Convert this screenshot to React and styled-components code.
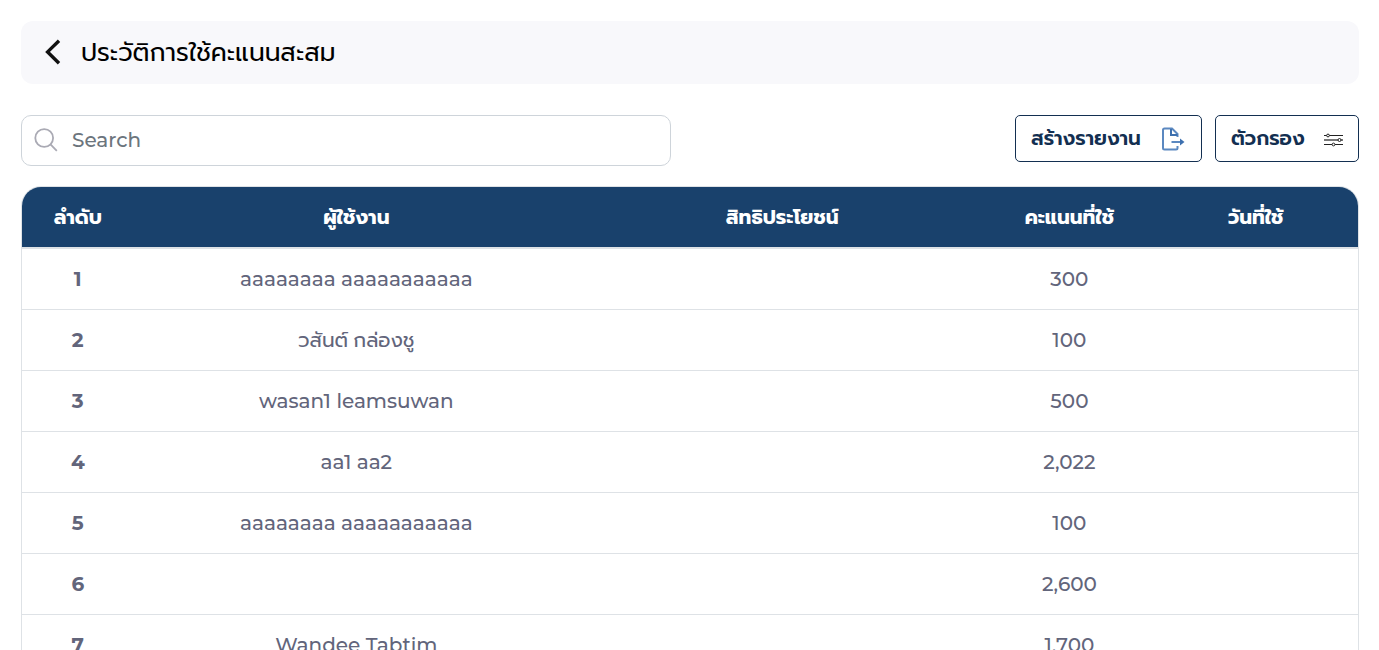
import React from "react";
import styled, { createGlobalStyle } from "styled-components";

const GlobalStyle = createGlobalStyle`
  *, *::before, *::after { box-sizing: border-box; }
  body {
    margin: 0;
    background: #fff;
    color: #000;
    font-family: Montserrat, Prompt, Inter, "Noto Sans Thai", "Noto Sans", sans-serif;
    font-size: 20px;
    font-weight: 500;
    line-height: 30px;
  }
`;

const Page = styled.main`
  padding: 21px 20px 0 21px;
`;

const TitleBar = styled.header`
  display: flex;
  align-items: center;
  gap: 19px;
  height: 63px;
  padding: 0 23px 2px;
  border-radius: 12px;
  background: #f8f8fb;
`;

const BackButton = styled.button`
  display: flex;
  padding: 0;
  border: 0;
  background: none;
  cursor: pointer;
`;

const Title = styled.h1`
  margin: 0;
  font-size: 25px;
  font-weight: 400;
  line-height: 40px;
  white-space: nowrap;
`;

const Toolbar = styled.div`
  display: flex;
  align-items: flex-start;
  justify-content: space-between;
  gap: 24px;
  margin: 31px 0 20px;
`;

const SearchBox = styled.label`
  display: flex;
  align-items: center;
  gap: 14px;
  flex: 0 1 650px;
  height: 51px;
  padding: 0 12px 2px;
  border: 1px solid #ced4da;
  border-radius: 10px;
`;

const SearchInput = styled.input`
  flex: 1;
  min-width: 0;
  padding: 0;
  border: 0;
  outline: 0;
  background: none;
  color: #212529;
  font: inherit;
  &::placeholder { color: #6c757d; opacity: 1; }
`;

const Actions = styled.div`
  display: flex;
  gap: 13px;
`;

const ActionButton = styled.button`
  display: flex;
  align-items: center;
  justify-content: space-between;
  width: ${(p) => p.$width};
  height: 47px;
  padding: 0 15px 2px;
  border: 1px solid #132f51;
  border-radius: 5px;
  background: #fff;
  color: #132f51;
  font: inherit;
  font-weight: 600;
  white-space: nowrap;
  cursor: pointer;
  svg { margin-top: 2px; }
`;

const TableFrame = styled.div`
  overflow: hidden;
  border: 1px solid #dee2e6;
  border-radius: 20px 20px 0 0;
`;

const Table = styled.table`
  width: 100%;
  table-layout: fixed;
  border-spacing: 0;
  color: #62657b;
  text-align: center;
`;

const Column = styled.col`
  width: ${(p) => p.$width};
`;

const HeadCell = styled.th`
  height: 62px;
  padding: 0;
  border-bottom: 2px solid #dee2e6;
  background: #19416c;
  color: #fff;
  font-weight: 700;
  white-space: nowrap;
`;

const RowHead = styled.th`
  height: 61px;
  padding: 0;
  border-bottom: 1px solid #dee2e6;
  font-weight: 700;
`;

const Cell = styled.td`
  padding: 0;
  border-bottom: 1px solid #dee2e6;
  &:lang(th) { font-weight: 400; }
`;

const BackIcon = () => (
  <svg width="18" height="26" viewBox="0 0 18 26" fill="none" stroke="#111" strokeWidth="3.4" aria-hidden="true">
    <path d="M15 1.8 3.6 12.9 15 24.2" />
  </svg>
);

const SearchIcon = () => (
  <svg width="24" height="24" viewBox="0 0 24 24" fill="none" stroke="#aaaab4" strokeWidth="1.8" aria-hidden="true">
    <circle cx="10.2" cy="10" r="8.9" />
    <path d="m16.5 16.4 6.3 6.4" />
  </svg>
);

const ExportIcon = () => (
  <svg width="24" height="24" viewBox="0 0 24 24" fill="none" stroke="#5b88c0" strokeWidth="2" aria-hidden="true">
    <path d="M15.500 19v2q0 1.500-1.500 1.500H2.500Q1 22.500 1 21V3Q1 1.500 2.500 1.500H10L15.500 7v3" />
    <path d="M9 2v6H15.500" stroke="#3d70af" />
    <path d="M9.500 15H20" />
    <path d="m18 11.500 4.500 3.500-4.500 3.500Z" fill="#3d70af" stroke="none" />
  </svg>
);

const FilterIcon = () => (
  <svg width="20" height="16" viewBox="0 0 20 16" fill="#fff" stroke="#222" strokeWidth="1" aria-hidden="true">
    <path d="M1 4.500h19M1 13.500h19" />
    <path d="M1 9h19" stroke="#777" strokeWidth="2" />
    <circle cx="5" cy="4.500" r="1.400" />
    <circle cx="16.500" cy="9" r="1.500" />
    <circle cx="10.500" cy="13.500" r="1.400" />
  </svg>
);

const columns = [
  { label: "ลำดับ", width: "8.35%" },
  { label: "ผู้ใช้งาน", width: "33.35%" },
  { label: "สิทธิประโยชน์", width: "30.4%" },
  { label: "คะแนนที่ใช้", width: "12.6%" },
  { label: "วันที่ใช้", width: "15.3%" },
];

const rows = [
  { user: "aaaaaaaa aaaaaaaaaaa", points: "300" },
  { user: "วสันต์ กล่องชู", points: "100", lang: "th" },
  { user: "wasan1 leamsuwan", points: "500" },
  { user: "aa1 aa2", points: "2,022" },
  { user: "aaaaaaaa aaaaaaaaaaa", points: "100" },
  { user: "", points: "2,600" },
  { user: "Wandee Tabtim", points: "1,700" },
];

export default function App() {
  return (
    <Page>
      <GlobalStyle />
      <TitleBar>
        <BackButton type="button" aria-label="Back"><BackIcon /></BackButton>
        <Title>ประวัติการใช้คะแนนสะสม</Title>
      </TitleBar>
      <Toolbar>
        <SearchBox>
          <SearchIcon />
          <SearchInput type="text" placeholder="Search" aria-label="Search" />
        </SearchBox>
        <Actions>
          <ActionButton type="button" $width="187px">สร้างรายงาน<ExportIcon /></ActionButton>
          <ActionButton type="button" $width="144px">ตัวกรอง<FilterIcon /></ActionButton>
        </Actions>
      </Toolbar>
      <TableFrame>
        <Table>
          <colgroup>
            {columns.map((c) => <Column key={c.label} $width={c.width} />)}
          </colgroup>
          <thead>
            <tr>
              {columns.map((c) => <HeadCell key={c.label} scope="col">{c.label}</HeadCell>)}
            </tr>
          </thead>
          <tbody>
            {rows.map((r, i) => (
              <tr key={i}>
                <RowHead scope="row">{i + 1}</RowHead>
                <Cell lang={r.lang}>{r.user}</Cell>
                <Cell />
                <Cell>{r.points}</Cell>
                <Cell />
              </tr>
            ))}
          </tbody>
        </Table>
      </TableFrame>
    </Page>
  );
}
